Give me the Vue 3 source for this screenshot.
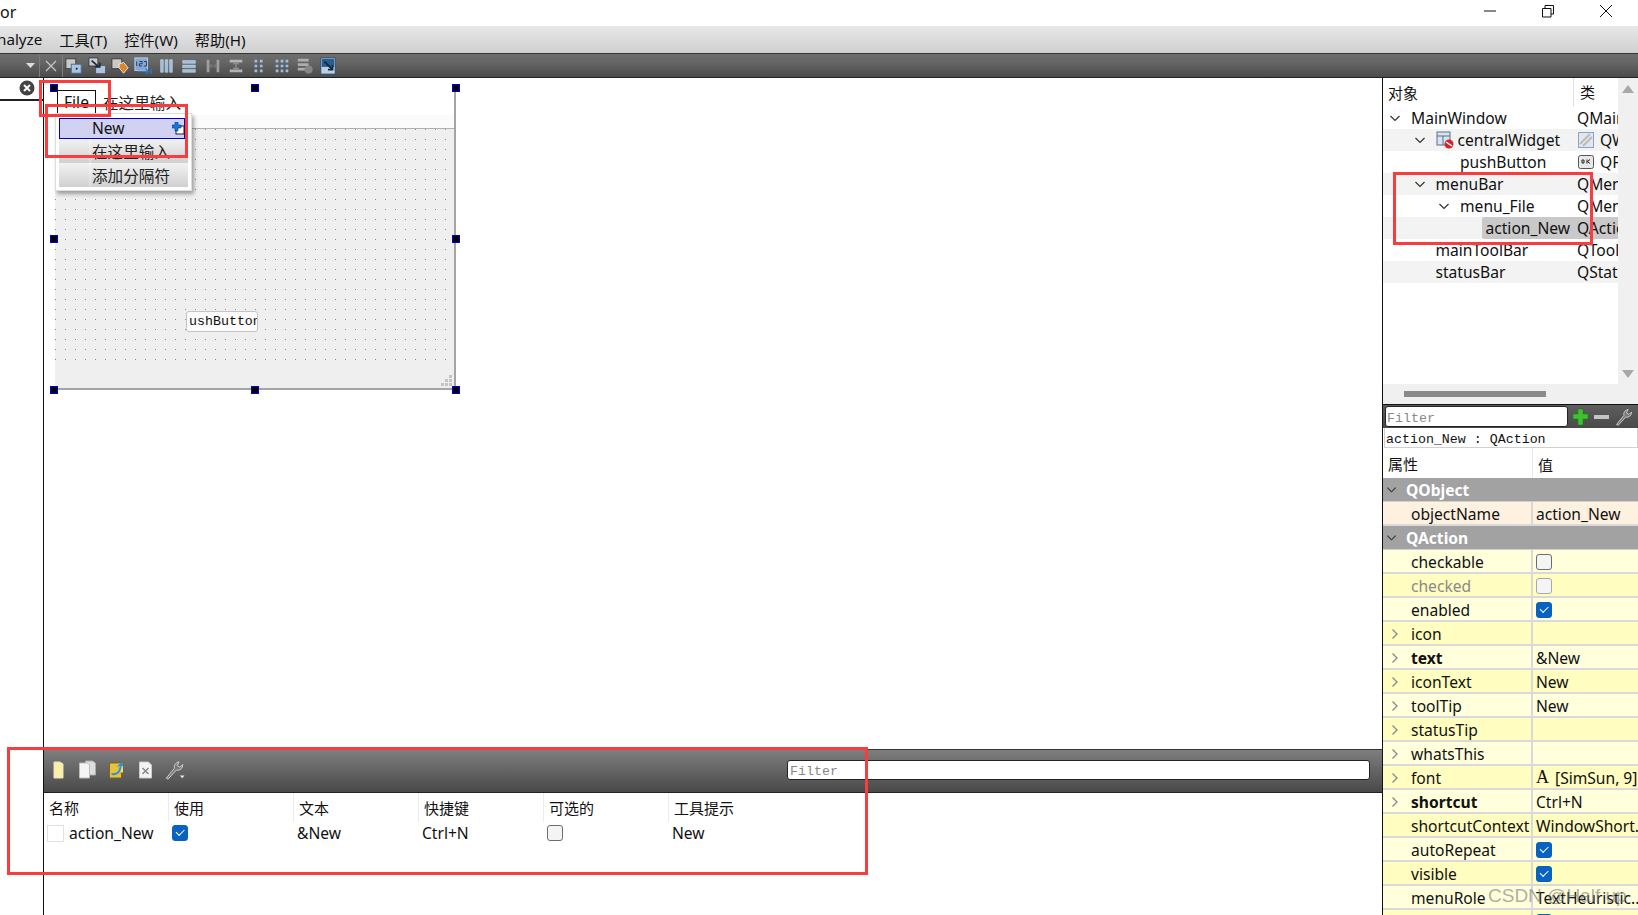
<template>
  <div class="app">
    <div class="titlebar">
      <span class="title-text">or</span>
      <div class="win-btns">
        <svg width="14" height="14" viewBox="0 0 14 14"><path d="M1 7h12" stroke="#111" fill="none" /></svg>
        <svg width="14" height="14" viewBox="0 0 14 14"><path d="M1.500 4.500h8.500v8.500h-8.500zM4 4.500v-3h8.500v8.500h-2.500" stroke="#111" fill="none" /></svg>
        <svg width="14" height="14" viewBox="0 0 14 14"><path d="M1 1l12 12M13 1l-12 12" stroke="#111" fill="none" /></svg>
      </div>
    </div>

    <div class="menubar">
      <span v-for="m in menus" :key="m" class="menu-item">{{ m }}</span>
    </div>

    <div class="toolbar">
      <svg class="drop" width="9" height="5" viewBox="0 0 9 5"><path d="M0 0h9L4.500 5z" fill="#ddd" /></svg>
      <span class="sep"></span>
      <svg class="tool-x" width="14" height="14" viewBox="0 0 14 14"><path d="M2 2l10 10M12 2L2 12" stroke="#c8c8c8" stroke-width="1.200" fill="none" /></svg>
      <span class="sep"></span>
      <div class="tool-icons">
        <!-- edit widgets -->
        <svg viewBox="0 0 20 20"><rect x="1" y="2" width="11" height="11" fill="#d8d8d8" stroke="#333" /><rect x="7" y="8" width="11" height="10" fill="#b9d3f4" stroke="#3a6ea8" /><rect x="12" y="12" width="2" height="2" fill="#123" /></svg>
        <!-- signals -->
        <svg viewBox="0 0 20 20"><rect x="1" y="1" width="10" height="9" fill="#d8d8d8" stroke="#333" /><rect x="9" y="10" width="10" height="8" fill="#b9d3f4" /><path d="M4 4l8 7M8 11h5V6" stroke="#0c2540" stroke-width="2" fill="none" /></svg>
        <!-- buddies -->
        <svg viewBox="0 0 20 20"><rect x="1" y="2" width="11" height="11" fill="#d8d8d8" stroke="#333" /><path d="M9 8l5-2 5 6-5 6-5-6z" fill="#f58a1f" stroke="#fff" /></svg>
        <!-- tab order -->
        <svg viewBox="0 0 20 20"><rect x="1" y="1" width="14" height="14" fill="#8fb2e0" stroke="#cfe0f5" /><path d="M3 5v5M6 5h3v2.500H6V10h3M11 5h3v5h-3" stroke="#0c2f70" fill="none" /><path d="M4 16h12M13 13l3 3-3 3" stroke="#2d7ed6" stroke-width="1.500" fill="none" /><path d="M19 13v6" stroke="#2d7ed6" stroke-width="1.500" /></svg>
        <!-- layout horizontally -->
        <svg viewBox="0 0 20 20"><path d="M4 3h3v14H4zM9 3h3v14H9zM14 3h3v14h-3z" fill="#a5cdf2" stroke="#e4f0fb" stroke-width=".6" /></svg>
        <!-- layout vertically -->
        <svg viewBox="0 0 20 20"><path d="M3 4h14v3H3zM3 9h14v3H3zM3 14h14v3H3z" fill="#a5cdf2" stroke="#e4f0fb" stroke-width=".6" /></svg>
        <!-- splitter h -->
        <svg viewBox="0 0 20 20"><path d="M3 3h3v14H3zM14 3h3v14h-3z" fill="#a8a8a8" /><path d="M6 10h8M8 8l-2 2 2 2M12 8l2 2-2 2" stroke="#888" fill="none" /></svg>
        <!-- splitter v -->
        <svg viewBox="0 0 20 20"><path d="M3 3h14v3H3zM3 14h14v3H3z" fill="#c0c0c0" /><path d="M10 6v8M7 8l3-2 3 2M7 12l3 2 3-2" stroke="#999" stroke-width="1.500" fill="none" /></svg>
        <!-- form layout -->
        <svg viewBox="0 0 20 20"><path d="M5 3h3v3H5zM11 3h3v3h-3zM5 8.500h3v3H5zM11 8.500h3v3h-3zM5 14h3v3H5zM11 14h3v3h-3z" fill="#a5cdf2" /></svg>
        <!-- grid layout -->
        <svg viewBox="0 0 20 20"><path d="M3 3h3v3H3zM8.500 3h3v3h-3zM14 3h3v3h-3zM3 8.500h3v3H3zM8.500 8.500h3v3h-3zM14 8.500h3v3h-3zM3 14h3v3H3zM8.500 14h3v3h-3zM14 14h3v3h-3z" fill="#a5cdf2" /></svg>
        <!-- break layout -->
        <svg viewBox="0 0 20 20"><path d="M2 2h12v3H2zM2 7h12v3H2zM2 12h8v3H2z" fill="#b8b8b8" /><circle cx="14" cy="14" r="4.500" fill="#8d8d8d" /></svg>
        <!-- adjust size -->
        <svg viewBox="0 0 20 20"><rect x="2" y="1" width="16" height="18" fill="#cfe0f2" stroke="#20486f" /><rect x="3" y="2" width="14" height="9" fill="#1f5f96" /><path d="M6 5l9 9M15 9v5h-5" stroke="#06243f" stroke-width="2" fill="none" /></svg>
      </div>
    </div>

    <div class="workspace">
      <div class="left-dock">
        <div class="left-search">
          <svg width="16" height="16" viewBox="0 0 16 16"><circle cx="8" cy="8" r="7.500" fill="#444" /><path d="M5 5l6 6M11 5l-6 6" stroke="#fff" stroke-width="2" /></svg>
        </div>
      </div>

      <div class="center">
        <div class="canvas">
          <div class="form">
            <div class="form-menubar">
              <span class="form-file">File</span>
              <span class="form-hint">在这里输入</span>
            </div>
            <div class="form-toolstrip"></div>
            <div class="form-central"></div>
            <div class="form-status">
              <svg width="12" height="12" viewBox="0 0 12 12"><path d="M8 0h3v3H8zM4 4h3v3H4zM8 4h3v3H8zM0 8h3v3H0zM4 8h3v3H4zM8 8h3v3H8z" fill="#c4c4c4" /></svg>
            </div>

            <button class="push">ushButton</button>

            <div class="popup">
              <div class="popup-item active">
                New
                <svg class="new-icon" width="13" height="13" viewBox="0 0 13 13"><rect x="4" y="4" width="8" height="8" fill="#fff" stroke="#222" /><path d="M3 0h3v3h3v3H6v3H3V6H0V3h3z" fill="#1677d8" stroke="#063a80" stroke-width=".6" /></svg>
              </div>
              <div class="popup-item">在这里输入</div>
              <div class="popup-item">添加分隔符</div>
            </div>
          </div>
        </div>

        <div class="action-editor">
          <div class="ae-toolbar">
            <div class="ae-tools">
              <svg viewBox="0 0 13 20"><path d="M2 2h6l3 2v14H2z" fill="#fbf0a8" stroke="#e9e2c0" /></svg>
              <svg viewBox="0 0 20 20"><path d="M8 1h7l3 2v12H8z" fill="#ddd" stroke="#aaa" /><path d="M2 3h8l2 2v13H2z" fill="#f4f4f4" stroke="#bbb" /></svg>
              <svg viewBox="0 0 20 20"><path d="M3 3h9l3 2v13H3z" fill="#e9c23c" stroke="#7b6414" /><path d="M12 3h5v10h-3" fill="#f3dc7b" stroke="#7b6414" /><path d="M5 13c5 1 8-2 8-7l-3 1 5-5 3 5-3-1c0 6-4 10-10 9z" fill="#2b8fe0" /></svg>
              <svg viewBox="0 0 18 20"><path d="M3 2h9l3 3v13H3z" fill="#f4f4f4" stroke="#ccc" /><path d="M6 8l6 6M12 8l-6 6" stroke="#888" stroke-width="1.500" /></svg>
              <svg viewBox="0 0 24 22"><path d="M3 20l9-11c-1-3 1-6 5-7l-2 4 3 2 3-3c0 4-3 7-7 6L5 21z" fill="#777" stroke="#ddd" /><path d="M18 17h5l-2.500 3z" fill="#eee" /></svg>
            </div>
            <input class="ae-filter" placeholder="Filter" />
          </div>
          <div class="ae-head">
            <span v-for="h in actionHeads" :key="h" class="ae-hcell">{{ h }}</span>
          </div>
          <div class="ae-row">
            <span class="ae-cell ae-name"><i class="blank-icon"></i>action_New</span>
            <span class="ae-cell"><i class="check on"></i></span>
            <span class="ae-cell">&amp;New</span>
            <span class="ae-cell">Ctrl+N</span>
            <span class="ae-cell"><i class="check"></i></span>
            <span class="ae-cell">New</span>
          </div>
        </div>
      </div>

      <div class="right-dock">
        <div class="obj-inspector">
          <div class="obj-main">
            <div class="obj-list">
              <div class="obj-head">
                <span class="obj-h1">对象</span>
                <span class="obj-h2">类</span>
              </div>
              <div v-for="(r, i) in objects" :key="r.name" class="obj-row" :class="{ alt: i % 2 === 1 }">
                <div class="obj-name" :style="{ paddingLeft: 4 + r.depth * 24.5 + 'px' }">
                  <span class="twist">
                    <svg v-if="r.open" width="12" height="12" viewBox="0 0 12 12"><path d="M1.500 4L6 8.500 10.500 4" stroke="#333" stroke-width="1.200" fill="none" /></svg>
                  </span>
                  <svg v-if="r.icon" class="obj-icon" width="18" height="18" viewBox="0 0 18 18"><rect x="1" y="1" width="13" height="13" fill="#dbe4ee" stroke="#56708e" /><path d="M1 5h13M7 5v9" stroke="#56708e" /><circle cx="13" cy="13" r="4.500" fill="#d3232c" /><path d="M10 11l6 4" stroke="#fff" stroke-width="1.500" /></svg>
                  <span class="obj-label" :class="{ sel: r.sel }">{{ r.name }}</span>
                </div>
                <div class="obj-class" :class="{ sel: r.sel }">
                  <svg v-if="r.classIcon === 'widget'" class="cls-icon" width="16" height="16" viewBox="0 0 16 16"><rect x=".5" y=".5" width="15" height="15" fill="#e6e6e6" stroke="#7ea6d8" /><path d="M2 12L12 2M5 14L14 5" stroke="#bbb" stroke-width="2" /></svg>
                  <svg v-if="r.classIcon === 'button'" class="cls-icon" width="16" height="16" viewBox="0 0 16 16"><rect x=".5" y="1.500" width="15" height="13" rx="2" fill="#e8e8e8" stroke="#555" /><path d="M4 6h2v3H4zM9 5.500v4M12 5.500L9.500 7.500 12 9.500" stroke="#222" fill="none" /></svg>
                  {{ r.cls }}
                </div>
              </div>
            </div>
            <div class="obj-vscroll">
              <svg width="12" height="8" viewBox="0 0 12 8"><path d="M6 0l6 8H0z" fill="#a8a8a8" /></svg>
              <svg width="12" height="8" viewBox="0 0 12 8"><path d="M0 0h12L6 8z" fill="#a8a8a8" /></svg>
            </div>
          </div>
          <div class="obj-hscroll"><span class="obj-thumb"></span></div>
        </div>

        <div class="prop-editor">
          <div class="prop-toolbar">
            <input class="prop-filter" placeholder="Filter" />
            <svg width="18" height="18" viewBox="0 0 18 18"><path d="M6 1h5v5h5v5h-5v6H6v-6H1V6h5z" fill="#3cc22f" stroke="#1d7a18" stroke-width=".5" /></svg>
            <svg width="18" height="18" viewBox="0 0 18 18"><path d="M1 7h15v4H1z" fill="#c4c4c4" /></svg>
            <svg width="20" height="20" viewBox="0 0 24 22"><path d="M3 20l9-11c-1-3 1-6 5-7l-2 4 3 2 3-3c0 4-3 7-7 6L5 21z" fill="#777" stroke="#ddd" /></svg>
          </div>
          <div class="prop-class">action_New : QAction</div>
          <div class="prop-head">
            <span class="prop-h1">属性</span>
            <span class="prop-h2">值</span>
          </div>
          <template v-for="p in props" :key="p.name">
            <div v-if="p.group" class="prop-group">
              <svg width="11" height="11" viewBox="0 0 12 12"><path d="M1.500 4L6 8.500 10.500 4" stroke="#333" stroke-width="1.200" fill="none" /></svg>
              <span>{{ p.name }}</span>
            </div>
            <div v-else class="prop-row" :class="p.tone">
              <div class="prop-name" :class="{ bold: p.bold, dim: p.dim }">
                <span class="prop-twist">
                  <svg v-if="p.more" width="8" height="12" viewBox="0 0 8 12"><path d="M1.500 1.500L6 6l-4.500 4.500" stroke="#888" stroke-width="1.300" fill="none" /></svg>
                </span>
                {{ p.name }}
              </div>
              <div class="prop-value">
                <i v-if="p.check !== undefined" class="check" :class="{ on: p.check, dim: p.dim }"></i>
                <template v-else>
                  <span v-if="p.fontIcon" class="font-a">A</span>{{ p.value }}
                </template>
              </div>
            </div>
          </template>
        </div>
      </div>
    </div>

    <!-- 赤枠の注釈 -->
    <span class="mark mark-file"></span>
    <span class="mark mark-new"></span>
    <span class="mark mark-tree"></span>
    <span class="mark mark-actions"></span>

    <span class="handle" v-for="h in handles" :key="h.x + '-' + h.y" :style="{ left: h.x + 'px', top: h.y + 'px' }"></span>

    <span class="watermark">CSDN @Half up</span>
  </div>
</template>

<script setup>
const menus = ['nalyze', '工具(T)', '控件(W)', '帮助(H)']
const actionHeads = ['名称', '使用', '文本', '快捷键', '可选的', '工具提示']

const objects = [
  { name: 'MainWindow', cls: 'QMainWindow', depth: 0, open: true },
  { name: 'centralWidget', cls: 'QWidget', depth: 1, open: true, icon: true, classIcon: 'widget' },
  { name: 'pushButton', cls: 'QPushButton', depth: 2, classIcon: 'button' },
  { name: 'menuBar', cls: 'QMenuBar', depth: 1, open: true },
  { name: 'menu_File', cls: 'QMenu', depth: 2, open: true },
  { name: 'action_New', cls: 'QAction', depth: 3, sel: true },
  { name: 'mainToolBar', cls: 'QToolBar', depth: 1 },
  { name: 'statusBar', cls: 'QStatusBar', depth: 1 }
]

const props = [
  { name: 'QObject', group: true },
  { name: 'objectName', value: 'action_New', tone: 'peach' },
  { name: 'QAction', group: true },
  { name: 'checkable', check: false, tone: 'y1' },
  { name: 'checked', check: false, dim: true, tone: 'y2' },
  { name: 'enabled', check: true, tone: 'y1' },
  { name: 'icon', value: '', more: true, tone: 'y2' },
  { name: 'text', value: '&New', more: true, bold: true, tone: 'y1' },
  { name: 'iconText', value: 'New', more: true, tone: 'y2' },
  { name: 'toolTip', value: 'New', more: true, tone: 'y1' },
  { name: 'statusTip', value: '', more: true, tone: 'y2' },
  { name: 'whatsThis', value: '', more: true, tone: 'y1' },
  { name: 'font', value: '[SimSun, 9]', fontIcon: true, more: true, tone: 'y2' },
  { name: 'shortcut', value: 'Ctrl+N', more: true, bold: true, tone: 'y1' },
  { name: 'shortcutContext', value: 'WindowShort...', tone: 'y2' },
  { name: 'autoRepeat', check: true, tone: 'y1' },
  { name: 'visible', check: true, tone: 'y2' },
  { name: 'menuRole', value: 'TextHeuristic...', tone: 'y1' },
  { name: 'iconVisibleInMenu', check: true, tone: 'y2' }
]

// フォームの選択ハンドル
const handles = [
  { x: 50, y: 84 }, { x: 251, y: 84 }, { x: 452, y: 84 },
  { x: 50, y: 235 }, { x: 452, y: 235 },
  { x: 50, y: 386 }, { x: 251, y: 386 }, { x: 452, y: 386 }
]
</script>

<style>
html, body {
  margin: 0;
  background: #fff;
  overflow: hidden;
}
</style>

<style scoped>
.app {
  position: relative;
  width: 1638px;
  height: 915px;
  overflow: hidden;
  display: flex;
  flex-direction: column;
  background: #fff;
  color: #111;
  font-family: "Noto Sans", "Noto Sans CJK SC", sans-serif;
  font-size: 15.600px;
}

.titlebar {
  height: 26px;
  display: flex;
  align-items: center;
  justify-content: space-between;
  background: #fff;
}
.title-text {
  font-size: 16px;
  margin-top: -3px;
}
.win-btns {
  display: flex;
  gap: 44px;
  padding-right: 25px;
  margin-top: -4px;
}

.menubar {
  height: 27px;
  display: flex;
  align-items: center;
  gap: 17px;
  padding: 0 0 2px;
  box-sizing: border-box;
  background: linear-gradient(#e8e8e8, #cfcfcf);
  font-size: 15.200px;
}
.menu-item:first-child { margin-left: -3px; }

.toolbar {
  height: 25px;
  box-sizing: border-box;
  display: flex;
  align-items: center;
  padding-left: 26px;
  background: linear-gradient(#6e6e6e 0, #666 35%, #4b4b4b 100%);
  border-top: 1px solid #333;
  border-bottom: 1px solid #222;
}
.drop { margin-right: 4px; }
.sep {
  width: 1px;
  height: 22px;
  background: #7c7c7c;
}
.tool-x { margin: 0 4px; }
.tool-icons {
  display: flex;
  gap: 5.100px;
  margin-left: 2px;
}
.tool-icons svg {
  width: 18px;
  height: 18px;
  opacity: .88;
}

.workspace {
  flex: 1;
  display: flex;
  min-height: 0;
}

.left-dock {
  width: 43px;
  border-right: 1px solid #111;
}
.left-search {
  height: 23px;
  padding: 2px 8px 0 0;
  box-sizing: border-box;
  border-bottom: 2px solid #222;
  display: flex;
  justify-content: flex-end;
}

.center {
  flex: 1;
  display: flex;
  flex-direction: column;
  min-width: 0;
}
.canvas {
  flex: 1;
  position: relative;
  background: #fff;
}

.form {
  position: absolute;
  left: 11px;
  top: 10px;
  width: 401px;
  height: 302px;
  box-sizing: border-box;
  border-right: 2px solid #a5a5a5;
  border-bottom: 2px solid #a5a5a5;
  display: flex;
  flex-direction: column;
  background: #efefef;
}
.form-menubar {
  height: 27px;
  flex: none;
  display: flex;
  align-items: flex-start;
  padding: 2px 0 0 2px;
  box-sizing: border-box;
  background: #fff;
}
.form-file {
  width: 39px;
  height: 30px;
  box-sizing: border-box;
  border: 1px solid #111;
  padding: 0 0 0 6px;
  position: relative;
}
.form-hint {
  margin-left: 7px;
  padding-top: 1px;
  color: #222;
}
.form-toolstrip {
  height: 14px;
  flex: none;
  box-sizing: border-box;
  background: #fbfbfb;
  border-bottom: 1px solid #b0b0b0;
}
.form-central {
  flex: 1;
  background-color: #efefef;
  background-image: radial-gradient(circle at .5px .5px, #8c8c8c .75px, transparent .75px);
  background-size: 10px 10px;
  background-position: 0 0;
}
.form-status {
  height: 28px;
  flex: none;
  display: flex;
  align-items: flex-end;
  justify-content: flex-end;
  padding: 0 1px 1px 0;
  box-sizing: border-box;
}

.push {
  position: absolute;
  left: 131px;
  top: 223px;
  width: 72px;
  height: 21px;
  padding: 0 2px;
  box-sizing: border-box;
  overflow: hidden;
  white-space: nowrap;
  text-align: left;
  background: #fbfbfb;
  border: 1px solid #c4c4c4;
  border-radius: 3px;
  font-family: "Liberation Mono", monospace;
  font-size: 13.300px;
  color: #111;
}

.popup {
  position: absolute;
  left: 0;
  top: 25px;
  width: 137px;
  height: 78px;
  box-sizing: border-box;
  padding: 4px 3px;
  background: #fff;
  border: 1px solid #ddd;
  box-shadow: 2px 3px 4px rgba(0, 0, 0, .35);
  z-index: 3;
}
.popup-item {
  position: relative;
  height: 24px;
  padding-left: 33px;
  line-height: 26px;
  background: linear-gradient(90deg, rgba(255, 255, 255, 0) 30px, rgba(255, 255, 255, .3) 30px, rgba(255, 255, 255, 0) 34px), linear-gradient(#f2f2f2, #d0d0d0);
  color: #222;
}
.popup-item.active {
  height: 21px;
  line-height: 19px;
  padding-left: 32px;
  box-sizing: border-box;
  margin-right: 3px;
  background: #d1d1f1;
  border: 1px solid #0000c8;
  color: #111;
}
.new-icon {
  position: absolute;
  right: -1px;
  top: 3px;
}

.action-editor {
  height: 166px;
  flex: none;
}
.ae-toolbar {
  height: 44px;
  box-sizing: border-box;
  display: flex;
  align-items: center;
  justify-content: space-between;
  padding: 0 12px 2px 0;
  background: linear-gradient(#7e7e7e, #494949);
  border-bottom: 1px solid #222;
  border-top: 1px solid #333;
}
.ae-tools {
  display: flex;
  align-items: center;
}
.ae-tools svg {
  width: 29px;
  height: 20px;
}
.ae-filter {
  width: 583px;
  height: 20px;
  box-sizing: border-box;
  padding: 2px 2px 0;
  border: 1px solid #222;
  border-radius: 3px;
  background: #fff;
  font-family: "Liberation Mono", monospace;
  font-size: 13.300px;
}
.ae-filter::placeholder,
.prop-filter::placeholder {
  color: #888;
}
.ae-head {
  display: flex;
  height: 29px;
}
.ae-hcell {
  width: 125px;
  box-sizing: border-box;
  padding: 4px 0 0 5px;
  font-size: 15px;
  border-right: 1px solid #ececec;
}
.ae-hcell:last-child { border-right: 0; }
.ae-row {
  display: flex;
  height: 22px;
  align-items: center;
}
.ae-cell {
  width: 125px;
  box-sizing: border-box;
  padding-left: 3px;
  display: flex;
  align-items: center;
}
.blank-icon {
  width: 15px;
  height: 15px;
  border: 1px solid #e2e2e2;
  margin-right: 5px;
}

.check {
  display: block;
  position: relative;
  width: 16px;
  height: 16px;
  box-sizing: border-box;
  background: #f4f4f4;
  border: 1px solid #6d6d6d;
  border-radius: 3px;
}
.check.dim { border-color: #a8a8a8; }
.check.on {
  background: #0a62c0;
  border-color: #0a62c0;
}
.check.on::after {
  content: "";
  position: absolute;
  left: 3px;
  top: 3px;
  width: 7px;
  height: 3.500px;
  border-left: 1px solid #fff;
  border-bottom: 1px solid #fff;
  transform: rotate(-45deg);
}

.right-dock {
  width: 255px;
  flex: none;
  border-left: 1px solid #111;
  display: flex;
  flex-direction: column;
  background: #fff;
  min-height: 0;
  overflow: hidden;
}

.obj-main {
  height: 306px;
  display: flex;
}
.obj-list {
  width: 235px;
  flex: none;
  overflow: hidden;
}
.obj-head {
  height: 29px;
  position: relative;
  display: flex;
  align-items: center;
  font-size: 15px;
}
.obj-h1 { width: 190px; padding-left: 5px; box-sizing: border-box; }
.obj-h2 {
  padding-left: 6px;
  height: 100%;
  line-height: 29px;
  border-left: 1px solid #e2e2e2;
}
.obj-row {
  height: 22px;
  display: flex;
  line-height: 21px;
  white-space: nowrap;
}
.obj-row.alt { background: #f3f3f3; }
.obj-name {
  width: 194px;
  flex: none;
  box-sizing: border-box;
  display: flex;
  align-items: center;
}
.twist {
  width: 24px;
  flex: none;
  display: flex;
  align-items: center;
  padding-left: 2px;
  box-sizing: border-box;
}
.obj-icon {
  margin: 0 4px 0 0;
  flex: none;
}
.obj-label.sel {
  flex: 1;
  margin-left: -3px;
  padding-left: 4px;
  background: #c9c9c9;
  height: 100%;
  line-height: 23px;
  border-radius: 2px 0 0 2px;
}
.obj-class {
  flex: 1;
  min-width: 0;
  overflow: hidden;
  display: flex;
  align-items: center;
}
.obj-class.sel { background: #c9c9c9; }
.cls-icon {
  margin: 0 6px 0 1px;
  flex: none;
}
.obj-vscroll {
  flex: 1;
  background: #f0f0f0;
  display: flex;
  flex-direction: column;
  justify-content: space-between;
  align-items: center;
  padding: 7px 0 6px;
}
.obj-hscroll {
  height: 20px;
  background: #f0f0f0;
  display: flex;
  align-items: center;
  padding-left: 21px;
  padding-bottom: 1px;
  box-sizing: border-box;
}
.obj-thumb {
  width: 142px;
  height: 6px;
  background: #8a8a8a;
}

.prop-editor {
  flex: 1;
  min-height: 0;
}
.prop-toolbar {
  height: 24px;
  box-sizing: border-box;
  display: flex;
  align-items: center;
  gap: 3px;
  padding-left: 2px;
  background: linear-gradient(#5e5e5e, #4a4a4a);
  border-top: 1px solid #111;
}
.prop-filter {
  width: 183px;
  height: 21px;
  flex: none;
  margin-right: 1px;
  box-sizing: border-box;
  padding: 3px 1px 0;
  border: 1px solid #222;
  border-radius: 3px;
  background: #fff;
  font-family: "Liberation Mono", monospace;
  font-size: 13.300px;
}
.prop-class {
  height: 20px;
  margin-left: 1px;
  box-sizing: border-box;
  padding: 2px 0 0 1px;
  border: 1px solid #d0d0d0;
  border-top: 0;
  line-height: 20px;
  font-family: "Liberation Mono", monospace;
  font-size: 13.300px;
}
.prop-head {
  height: 30px;
  display: flex;
  align-items: center;
  font-size: 15px;
}
.prop-h1 {
  width: 150px;
  height: 100%;
  line-height: 32px;
  box-sizing: border-box;
  padding-left: 5px;
  border-right: 1px solid #e6e6e6;
}
.prop-h2 { padding: 2px 0 0 5px; }
.prop-group {
  height: 24px;
  box-sizing: border-box;
  display: flex;
  align-items: center;
  gap: 9px;
  padding-left: 3px;
  background: #a2a2a2;
  border-bottom: 1px solid #d0d0d0;
  color: #fff;
  font-weight: 700;
}
.prop-row {
  height: 24px;
  box-sizing: border-box;
  display: flex;
  border-bottom: 2px solid #d9d9d9;
}
.prop-row.peach { background: #fff1e0; }
.prop-row.y1 { background: #ffffdc; }
.prop-row.y2 { background: #fffdbf; }
.prop-name {
  width: 150px;
  flex: none;
  box-sizing: border-box;
  display: flex;
  align-items: center;
  padding-top: 1px;
  border-right: 2px solid #d9d9d9;
  white-space: nowrap;
}
.prop-name.bold { font-weight: 700; }
.prop-name.dim { color: #8a8a8a; }
.prop-twist {
  width: 28px;
  flex: none;
  padding-left: 8px;
  box-sizing: border-box;
  display: flex;
  align-items: center;
}
.prop-value {
  flex: 1;
  min-width: 0;
  padding: 1px 0 0 3px;
  display: flex;
  align-items: center;
  overflow: hidden;
  white-space: pre;
}
.font-a {
  font-family: "Liberation Serif", serif;
  font-size: 18px;
  margin-right: 6px;
}

.handle {
  position: absolute;
  width: 6px;
  height: 6px;
  box-sizing: content-box;
  background: #000;
  border: 1px solid #0000e0;
  z-index: 4;
}

.mark {
  position: absolute;
  box-sizing: border-box;
  border: 3px solid #fb3c3c;
  z-index: 5;
}
.mark-file { left: 39px; top: 80px; width: 72px; height: 37px; }
.mark-new { left: 45px; top: 104px; width: 143px; height: 54px; }
.mark-tree { left: 1393px; top: 172px; width: 200px; height: 73px; }
.mark-actions { left: 7px; top: 747px; width: 861px; height: 128px; }

.watermark {
  position: absolute;
  left: 1488px;
  top: 885px;
  font-family: "Liberation Sans", sans-serif;
  font-size: 19px;
  color: rgba(120, 120, 120, .6);
  z-index: 6;
}
</style>
